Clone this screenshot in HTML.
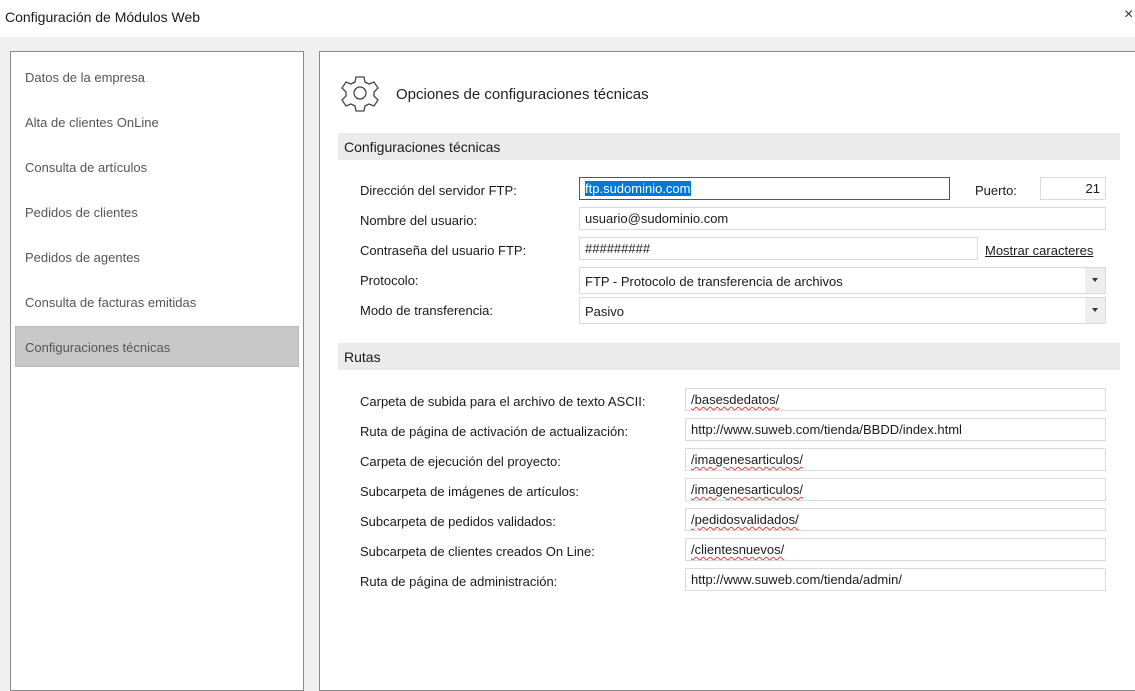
<!DOCTYPE html>
<html><head><meta charset="utf-8"><style>
*{margin:0;padding:0;box-sizing:border-box}
body{width:1135px;height:680px;overflow:hidden;background:#f0f0f0;font-family:"Liberation Sans",sans-serif;font-size:13px;color:#1a1a1a;position:relative}
.a{position:absolute;white-space:nowrap}
.in{position:absolute;background:#fff;border:1px solid #dadada;height:23px;padding:3px 0 0 5px;white-space:nowrap}
.sq{text-decoration:underline wavy #e04040;text-decoration-thickness:1px;text-underline-offset:2px}
.nav{position:absolute;left:25px;color:#555;font-size:13px}
.arr{position:absolute;right:0;top:0;width:20px;height:100%;background:#eee}
.arr:after{content:"";position:absolute;left:7px;top:10px;border-left:3px solid transparent;border-right:3px solid transparent;border-top:4px solid #333}
</style></head><body>
<div class="a" style="left:0;top:0;width:1135px;height:37px;background:#fff"></div>
<div class="a" style="left:5px;top:9px;font-size:14px">Configuración de Módulos Web</div>
<div class="a" style="left:1124px;top:6px;font-size:16px;color:#333">×</div>

<div class="a" style="left:10px;top:51px;width:294px;height:640px;background:#fff;border:1px solid #8a8a8a"></div>
<div class="nav" style="top:70px">Datos de la empresa</div>
<div class="nav" style="top:115px">Alta de clientes OnLine</div>
<div class="nav" style="top:160px">Consulta de artículos</div>
<div class="nav" style="top:205px">Pedidos de clientes</div>
<div class="nav" style="top:250px">Pedidos de agentes</div>
<div class="nav" style="top:295px">Consulta de facturas emitidas</div>
<div class="a" style="left:15px;top:326px;width:284px;height:41px;background:#c8c8c8;border:1px solid #b8b8b8"></div>
<div class="nav" style="top:340px">Configuraciones técnicas</div>

<div class="a" style="left:319px;top:51px;width:830px;height:640px;background:#fff;border:1px solid #8a8a8a"></div>
<svg class="a" style="left:340px;top:74px" width="40" height="38" viewBox="0 0 40 38" fill="none" stroke="#444" stroke-width="1.3">
<path d="M16 3h8l1 5 4 2 5-2 4 6-4 4v4l4 4-4 6-5-2-4 2-1 5h-8l-1-5-4-2-5 2-4-6 4-4v-4l-4-4 4-6 5 2 4-2z"/>
<circle cx="20" cy="19" r="6"/></svg>
<div class="a" style="left:396px;top:86px;font-size:15px;color:#222">Opciones de configuraciones técnicas</div>

<div class="a" style="left:338px;top:133px;width:782px;height:27px;background:#ebebeb"></div>
<div class="a" style="left:344px;top:139px;font-size:14px">Configuraciones técnicas</div>

<div class="a" style="left:360px;top:183px">Dirección del servidor FTP:</div>
<div class="in" style="left:579px;top:177px;width:371px;border-color:#555"><span style="background:#0078d7;color:#fff">ftp.sudominio.com</span></div>
<div class="a" style="left:975px;top:183px">Puerto:</div>
<div class="in" style="left:1040px;top:177px;width:66px;text-align:right;padding-right:5px">21</div>

<div class="a" style="left:360px;top:213px">Nombre del usuario:</div>
<div class="in" style="left:579px;top:207px;width:527px">usuario@sudominio.com</div>

<div class="a" style="left:360px;top:243px">Contraseña del usuario FTP:</div>
<div class="in" style="left:579px;top:237px;width:399px">#########</div>
<div class="a" style="left:985px;top:243px;text-decoration:underline">Mostrar caracteres</div>

<div class="a" style="left:360px;top:273px">Protocolo:</div>
<div class="in" style="left:579px;top:267px;width:527px;height:27px;padding-top:6px">FTP - Protocolo de transferencia de archivos<div class="arr"></div></div>
<div class="a" style="left:360px;top:303px">Modo de transferencia:</div>
<div class="in" style="left:579px;top:297px;width:527px;height:27px;padding-top:6px">Pasivo<div class="arr"></div></div>

<div class="a" style="left:338px;top:343px;width:782px;height:27px;background:#ebebeb"></div>
<div class="a" style="left:344px;top:349px;font-size:14px">Rutas</div>

<div class="a" style="left:360px;top:394px">Carpeta de subida para el archivo de texto ASCII:</div>
<div class="in" style="left:685px;top:388px;width:421px"><span class="sq">/basesdedatos/</span></div>
<div class="a" style="left:360px;top:424px">Ruta de página de activación de actualización:</div>
<div class="in" style="left:685px;top:418px;width:421px">http://www.suweb.com/tienda/BBDD/index.html</div>
<div class="a" style="left:360px;top:454px">Carpeta de ejecución del proyecto:</div>
<div class="in" style="left:685px;top:448px;width:421px"><span class="sq">/imagenesarticulos/</span></div>
<div class="a" style="left:360px;top:484px">Subcarpeta de imágenes de artículos:</div>
<div class="in" style="left:685px;top:478px;width:421px"><span class="sq">/imagenesarticulos/</span></div>
<div class="a" style="left:360px;top:514px">Subcarpeta de pedidos validados:</div>
<div class="in" style="left:685px;top:508px;width:421px"><span class="sq">/pedidosvalidados/</span></div>
<div class="a" style="left:360px;top:544px">Subcarpeta de clientes creados On Line:</div>
<div class="in" style="left:685px;top:538px;width:421px"><span class="sq">/clientesnuevos/</span></div>
<div class="a" style="left:360px;top:574px">Ruta de página de administración:</div>
<div class="in" style="left:685px;top:568px;width:421px">http://www.suweb.com/tienda/admin/</div>
</body></html>
